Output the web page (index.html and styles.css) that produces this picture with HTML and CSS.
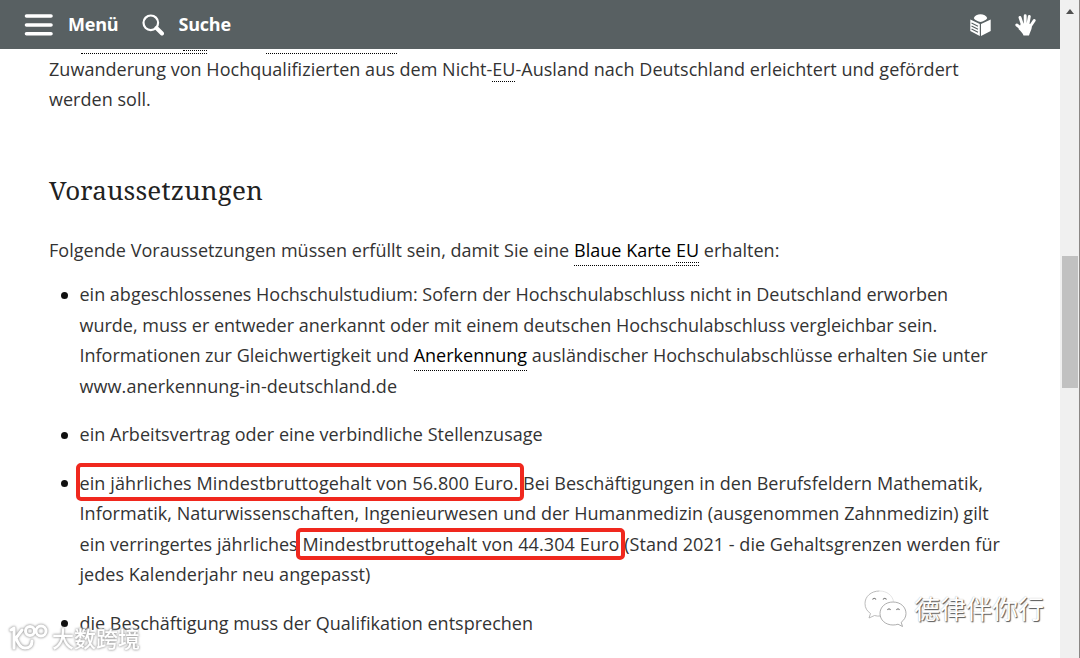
FILE: index.html
```html
<!DOCTYPE html>
<html lang="de">
<head>
    <meta charset="UTF-8">
    <meta name="viewport" content="width=device-width, initial-scale=1.0">
    <title>Blaue Karte EU</title>
    <link rel="stylesheet" href="styles.css">
</head>
<body>
    <div class="page">
        <header class="topbar">
            <a class="nav-item menu">
                <svg width="29" height="22" viewBox="0 0 29 22"><path d="M2.500 2h24.500M2.500 11h24.500M2.500 19.800h24.500" stroke="#fff" stroke-width="3.600" stroke-linecap="round"/></svg>
                Menü
            </a>
            <a class="nav-item search">
                <svg width="22" height="22" viewBox="0 0 22 22" fill="none" stroke="#fff"><circle cx="8.800" cy="8.800" r="7.300" stroke-width="2.200"/><path d="M14.500 14l5.500 5.500" stroke-width="4" stroke-linecap="round"/></svg>
                Suche
            </a>
            <div class="tools">
                <svg width="21" height="22" viewBox="0 0 21 22" fill="#fff">
                    <path d="M3.800 4C4.500 1.500 7.500 .2 10.500 .2S16.500 1.500 17.200 4C16.500 6 13 7.500 10.500 8 8 7.500 4.500 6 3.800 4z"/>
                    <path d="M.3 5.500L9.800 10v12L.3 17z"/>
                    <path d="M20.700 5.500L11 10v12l9.700-5z"/>
                    <path d="M1.500 9l6.500 3.200M1.500 12l6.500 3.200M1.500 15l6.500 3.200" stroke="#586062" stroke-width="1.100"/>
                </svg>
                <svg width="21" height="22" viewBox="0 0 21 22" fill="none" stroke="#fff" stroke-linecap="round">
                    <path d="M7.500 11L5 3.500M10.200 10V1.800M13 10l1.300-7.500M15.500 12l3.700-5.500M7 15L1.800 11" stroke-width="2.900"/>
                    <path d="M6 9.500l10 .5.800 3.500c-.5 3-1.800 4.500-2.800 8H8.500c-.5-2-2.500-4-5-6.500z" fill="#fff" stroke="none"/>
                </svg>
            </div>
        </header>

        <main class="content">
            <div class="cut-line">
                <span class="cut first"><span class="cut inner"></span></span>
                <span class="cut second"></span>
            </div>
            <p>Zuwanderung von Hochqualifizierten aus dem Nicht-<abbr>EU</abbr>-Ausland nach Deutschland erleichtert und gefördert<br>
            werden soll.</p>

            <h2>Voraussetzungen</h2>

            <p>Folgende Voraussetzungen müssen erfüllt sein, damit Sie eine <a class="glossary">Blaue Karte <abbr>EU</abbr></a> erhalten:</p>
            <ul>
                <li class="tight">ein abgeschlossenes Hochschulstudium: Sofern der Hochschulabschluss nicht in Deutschland erworben<br>
                wurde, muss er entweder anerkannt oder mit einem deutschen Hochschulabschluss vergleichbar sein.<br>
                Informationen zur Gleichwertigkeit und <a class="glossary">Anerkennung</a> ausländischer Hochschulabschlüsse erhalten Sie unter<br>
                <span class="link">www.anerkennung-in-deutschland.de</span></li>
                <li>ein Arbeitsvertrag oder eine verbindliche Stellenzusage</li>
                <li><span class="mark mark-tall">ein jährliches Mindestbruttogehalt von 56.800 Euro.</span> Bei Beschäftigungen in den Berufsfeldern Mathematik,<br>
                Informatik, Naturwissenschaften, Ingenieurwesen und der Humanmedizin (ausgenommen Zahnmedizin) gilt<br>
                ein verringertes jährliches <span class="mark">Mindestbruttogehalt von 44.304 Euro</span> (Stand 2021 - die Gehaltsgrenzen werden für<br>
                jedes Kalenderjahr neu angepasst)</li>
                <li class="tight">die Beschäftigung muss der Qualifikation entsprechen</li>
            </ul>
        </main>
    </div>

    <div class="scrollbar">
        <div class="arrow"></div>
        <div class="thumb"></div>
    </div>

    <div class="watermark wm-left">
        <svg width="40" height="28" viewBox="0 0 40 28" fill="none" stroke="#fff" stroke-width="3" stroke-linecap="round" stroke-linejoin="round">
            <path d="M2 6l3-2v20M13 6l-6 8c2 6 5 10 9 10 5 0 7-3 7-7"/>
            <circle cx="21" cy="7" r="4.500"/>
            <circle cx="32" cy="7" r="5"/>
        </svg>
        <span>大数跨境</span>
    </div>

    <div class="watermark wm-right">
        <svg width="44" height="38" viewBox="0 0 44 38" fill="#fff" stroke="#999" stroke-width=".8">
            <path d="M15.500 1C7 1 1 6.500 1 13.500c0 4.500 2 7.500 5.500 10L5 28l5.500-2.500c2 .6 4 .8 6.500.5" stroke="#aaa"/>
            <path d="M15.500 1C23 1 28.500 5.500 29.500 11.500" stroke="#ddd"/>
            <path d="M29 12c-7.500 0-13 5-13 11.500S21.500 35 29 35c2 0 3.500-.3 5-.8l4.500 2.300-1.300-4.200c3-2.300 4.800-5.300 4.800-8.800C42 17 36.500 12 29 12z"/>
            <path d="M8.500 9.500q1.800-2.500 3.500 0M19 9.500q1.800-2.500 3.500 0M23.500 20q1.500-2.500 3 0M32.500 20q1.500-2.500 3 0" stroke="#777" stroke-width="1.200" fill="none"/>
        </svg>
        <span>德律伴你行</span>
    </div>
</body>
</html>
```
FILE: styles.css
```css
body {
    margin: 0;
    display: flex;
    height: 658px;
    overflow: hidden;
    background-color: #fff;
    color: #333;
    font-family: "Open Sans", sans-serif;
    font-size: 18px;
    line-height: 30.4px;
    letter-spacing: 0.03px;
}
.page {
    width: 1060px;
    height: 658px;
    overflow: hidden;
}
/* Kopfzeile */
.topbar {
    display: flex;
    align-items: center;
    box-sizing: border-box;
    height: 49px;
    padding: 0 24px;
    background-color: #586062;
    color: #fff;
    font-weight: bold;
    letter-spacing: -0.2px;
}
.nav-item {
    display: flex;
    align-items: center;
}
.menu svg {
    margin-right: 15px;
}
.search {
    margin-left: 24px;
}
.search svg {
    margin-right: 14px;
}
.tools {
    display: flex;
    gap: 24px;
    margin-left: auto;
}
/* Inhalt */
.content {
    padding-left: 49px;
    white-space: nowrap;
}
.cut-line {
    display: flex;
    height: 5px;
    padding-left: 32px;
}
.cut {
    box-sizing: border-box;
    height: 5px;
    border-bottom: 1px dotted #000;
}
.first {
    display: flex;
    justify-content: flex-end;
    width: 126px;
}
.inner {
    width: 24px;
    height: 2px;
}
.second {
    width: 131px;
    margin-left: 59px;
}
p {
    margin: 0;
}
h2 {
    margin: 57px 0 26.3px;
    color: #222;
    font-family: "Noto Serif", "Liberation Serif", serif;
    font-size: 26px;
    font-weight: normal;
    line-height: 37px;
    letter-spacing: 0.15px;
}
abbr {
    border-bottom: 1px dotted #000;
}
.glossary {
    padding-bottom: 3px;
    border-bottom: 1px dotted #000;
    color: #000;
}
ul {
    margin: 13.8px 0 0;
    padding: 0 0 0 30.5px;
    list-style: none;
    line-height: 30.5px;
}
li {
    margin-bottom: 18px;
    letter-spacing: 0.04px;
}
li::before {
    content: "";
    display: inline-block;
    width: 7px;
    height: 7px;
    margin: 0 12px 0 -19px;
    border-radius: 50%;
    background-color: #111;
    vertical-align: 2.5px;
}
.tight {
    letter-spacing: 0;
}
.link {
    letter-spacing: 0.08px;
}
/* Rote Markierungen */
.mark {
    position: relative;
    letter-spacing: 0.11px;
}
.mark::after {
    content: "";
    position: absolute;
    inset: -4px -6px -4px -6px;
    border: 4px solid #f0281e;
    border-radius: 5px;
}
.mark-tall::after {
    inset: -8px -6px -6px -4px;
}
/* Bildlaufleiste */
.scrollbar {
    box-sizing: border-box;
    width: 20px;
    height: 658px;
    padding: 9px 1px 0 2px;
    border-right: 1px solid #8b8785;
    background-color: #f0f0f0;
}
.arrow {
    width: 0;
    margin: 0 auto;
    border: 4.5px solid transparent;
    border-top: 0;
    border-bottom: 5px solid #505050;
}
.thumb {
    height: 132px;
    margin-top: 242px;
    background-color: #c1c1c1;
}
/* Wasserzeichen */
.watermark {
    position: absolute;
    display: flex;
    align-items: center;
    color: #fff;
    font-family: "Open Sans", "Noto Sans CJK SC", sans-serif;
    letter-spacing: 0;
}
.wm-left {
    left: 9px;
    top: 623px;
    gap: 3px;
    font-size: 22px;
    font-weight: 500;
    filter: drop-shadow(0 0 1px #999) drop-shadow(0 0 1px #ccc);
}
.wm-right {
    left: 864px;
    top: 590px;
    gap: 6px;
    font-size: 26px;
    text-shadow: 1px 1px 1px #555, 0 0 1px #aaa;
}
```
